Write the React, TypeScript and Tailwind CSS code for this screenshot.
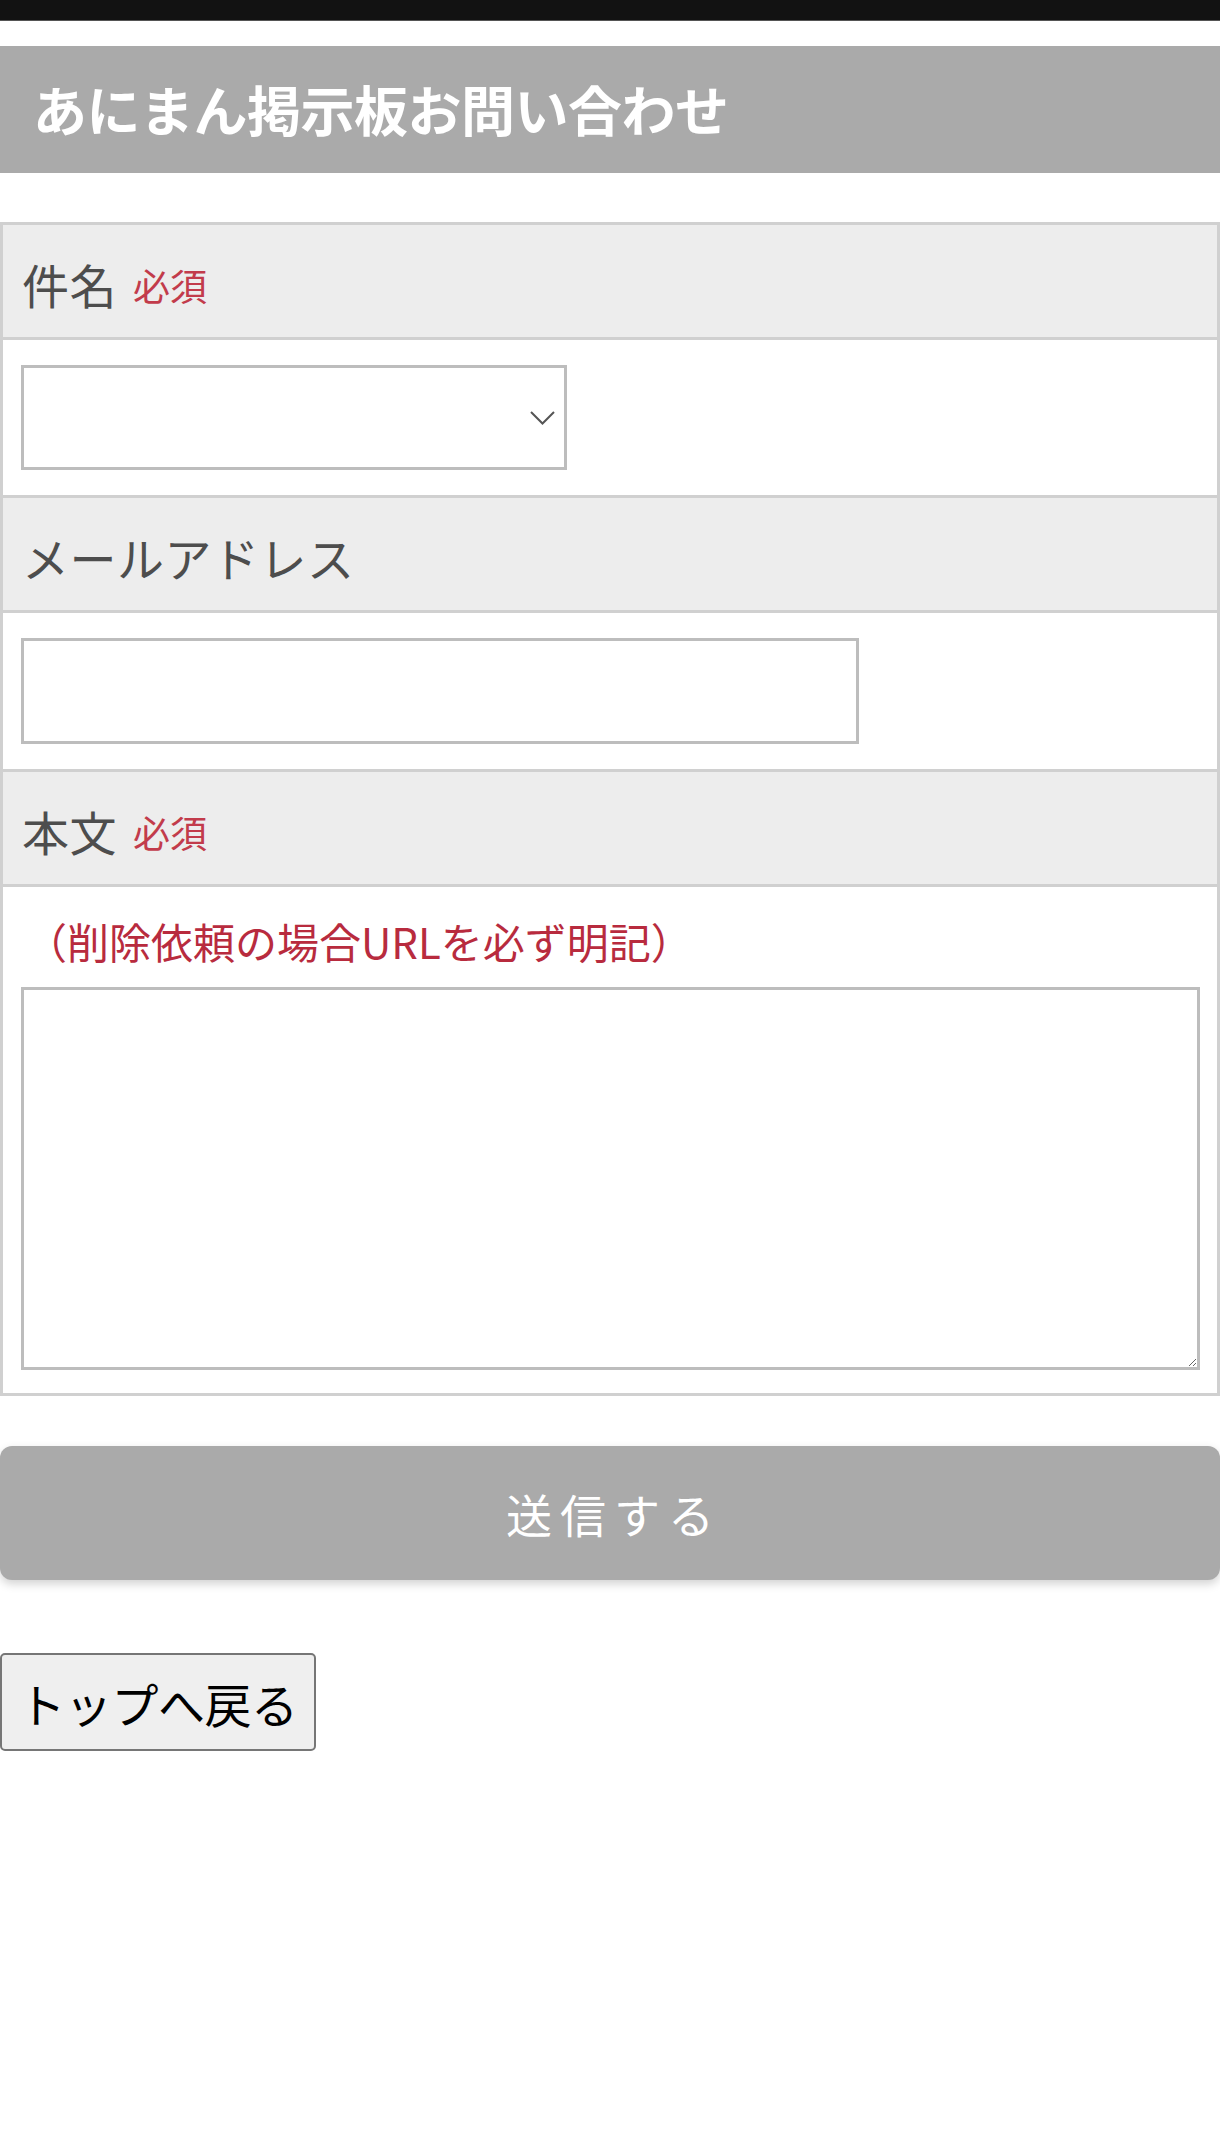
import React from "react";

const font = { fontFamily: '"Noto Sans CJK JP", "Noto Sans", sans-serif' };

function LabelRow({ label, required }: { label: string; required?: boolean }) {
  return (
    <div className="h-[115px] bg-[#ededed] flex items-center pl-[19px] pt-[4px] border-b-[3px] border-[#d0d0d0]">
      <span className="text-[47px] text-[#4d4d4d] leading-none tracking-[0.5px]">{label}</span>
      {required && <span className="ml-[16px] text-[37px] text-[#c23b4b] leading-none pt-[4px]">必須</span>}
    </div>
  );
}

export default function App() {
  return (
    <div className="w-[1220px] min-h-[2142px] bg-white" style={font}>
      <div className="h-[21px] bg-[#121212] border-b border-[#555]" />
      <div className="mt-[25px] h-[127px] bg-[#aaaaaa] flex items-center pl-[33px] pb-[1px]">
        <h1 className="text-[54px] font-bold text-white leading-none tracking-[-0.5px]">あにまん掲示板お問い合わせ</h1>
      </div>

      <div className="mt-[49px] border-[3px] border-[#d0d0d0]">
        <LabelRow label="件名" required />
        <div className="h-[158px] flex items-center pl-[18px] border-b-[3px] border-[#d0d0d0]">
          <div className="relative w-[546px] h-[105px]">
            <select className="appearance-none w-full h-full bg-white border-[3px] border-[#bdbdbd] outline-none" />
            <svg className="absolute right-[12px] top-[46px] pointer-events-none" width="25" height="14" viewBox="0 0 25 14">
              <polyline points="1,1 12.5,12.5 24,1" fill="none" stroke="#555" strokeWidth="2" />
            </svg>
          </div>
        </div>

        <LabelRow label="メールアドレス" />
        <div className="h-[159px] flex items-center pl-[18px] border-b-[3px] border-[#d0d0d0]">
          <input type="email" className="w-[838px] h-[106px] bg-white border-[3px] border-[#bdbdbd] outline-none" />
        </div>

        <LabelRow label="本文" required />
        <div className="pl-[18px] pt-[23px] pb-[23px]">
          <p className="h-[62px] flex items-center text-[42px] leading-none text-[#b82b3e] mb-[15px] pl-[4px]">（削除依頼の場合URLを必ず明記）</p>
          <textarea className="block w-[1179px] h-[383px] bg-white border-[3px] border-[#bdbdbd] outline-none" />
        </div>
      </div>

      <button className="mt-[50px] w-[1220px] h-[134px] bg-[#aaaaaa] rounded-[12px] shadow-[0_4px_10px_rgba(0,0,0,0.18)] text-white text-[46px] tracking-[8px] flex items-center justify-center pl-[8px]">
        送信する
      </button>

      <button className="mt-[73px] block w-[316px] h-[98px] bg-[#efefef] border-2 border-[#767676] rounded-[5px] text-black text-[47px] leading-none tracking-[-0.5px]">
        トップへ戻る
      </button>
    </div>
  );
}
